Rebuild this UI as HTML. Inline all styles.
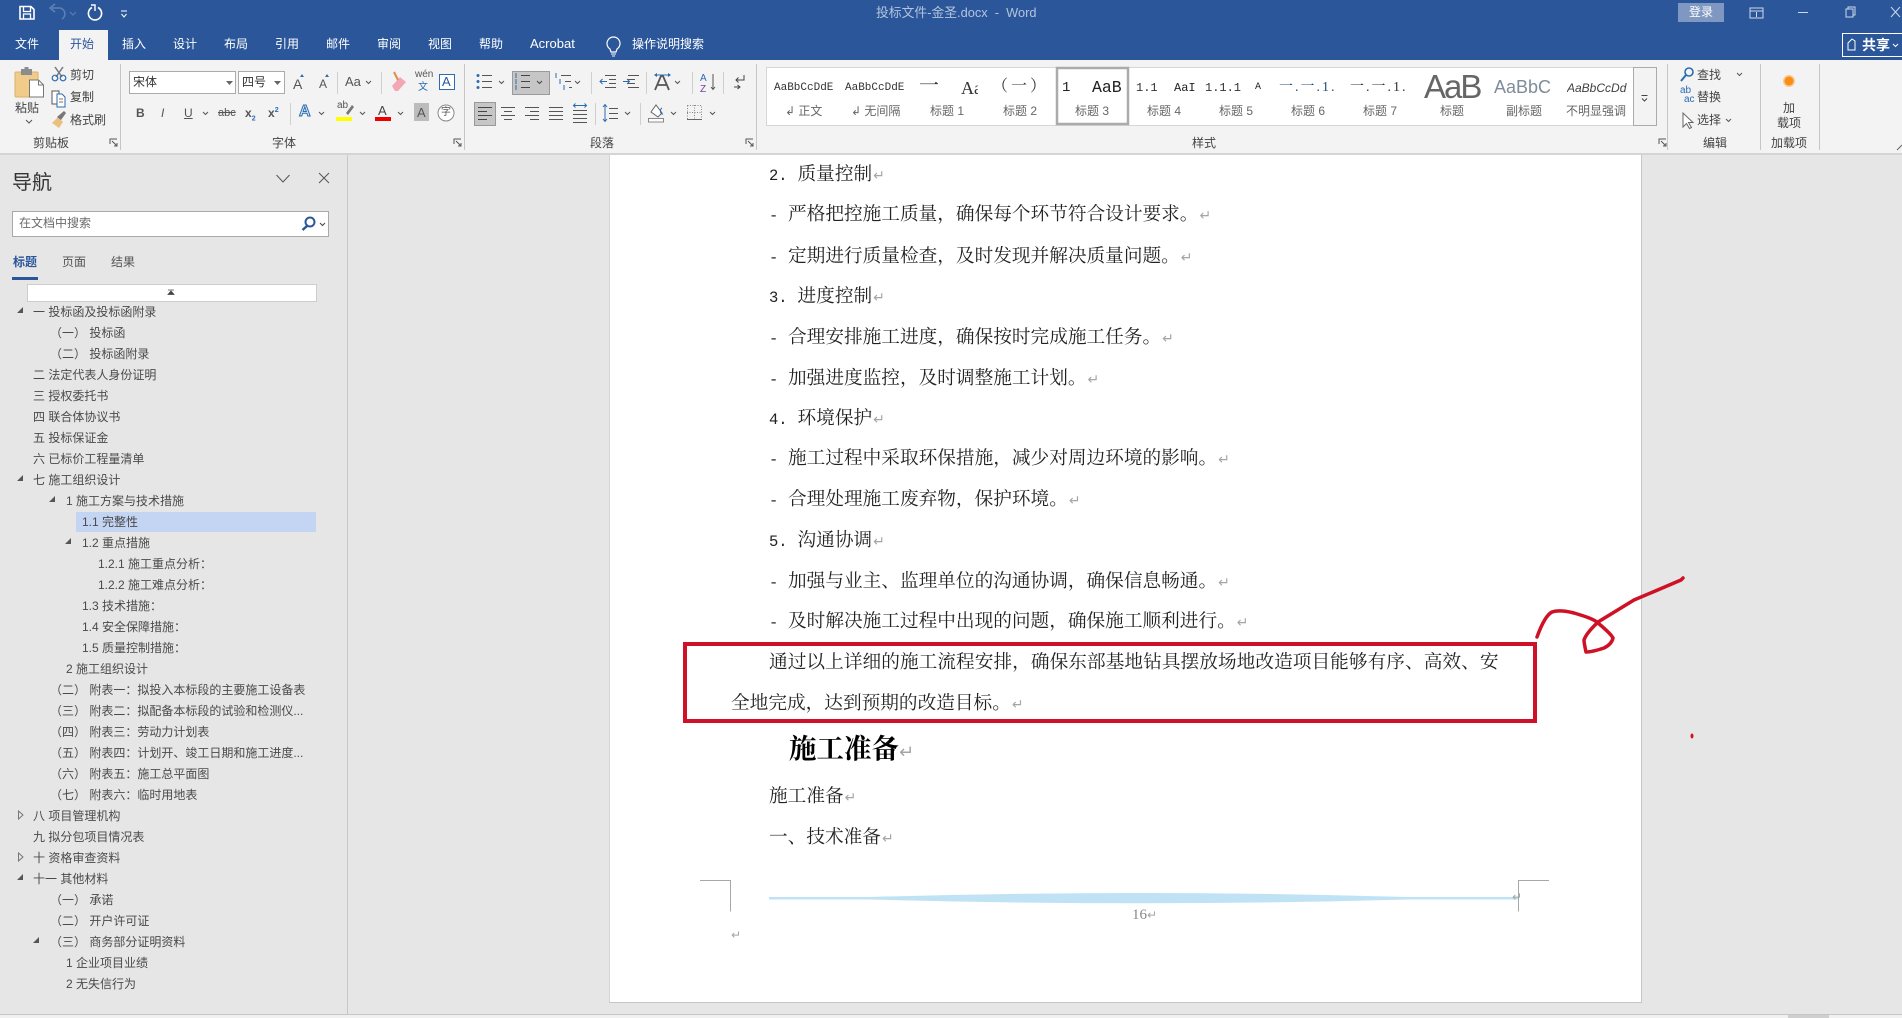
<!DOCTYPE html>
<html lang="zh-CN"><head><meta charset="utf-8"><title>投标文件-金圣.docx - Word</title>
<style>
*{box-sizing:border-box;margin:0;padding:0}
html,body{width:1902px;height:1018px;overflow:hidden;background:#e6e6e6}
body{position:relative;font-family:"Liberation Sans","Noto Sans CJK SC",sans-serif;font-size:12px;color:#444}
.a{position:absolute}
.t{position:absolute;white-space:nowrap;line-height:20px;height:20px}
.c{transform:translateX(-50%)}
.w{color:#fff}
.g{color:#666}
.mono{font-family:"Liberation Mono","Noto Sans CJK SC",monospace}
.se{font-family:"Liberation Serif","Noto Serif CJK SC",serif}
.n{position:absolute;white-space:nowrap;line-height:21px;height:21px;font-size:12px;color:#4a4a4a;margin-top:1px}
.d{position:absolute;left:769px;white-space:nowrap;font:18.67px/30px "Liberation Serif","Noto Serif CJK SC",serif;color:#222;margin-top:2px}
.m{display:inline-block;font:15.5px/30px "Liberation Mono",monospace}
.m2{width:28.5px}.m1{width:19px}
i.r{font:normal 14px/30px "DejaVu Sans",sans-serif;color:#a5a5a5;margin-left:1px}
svg{position:absolute;left:0;top:0}
</style></head><body>
<!-- chrome backgrounds -->
<div class="a" style="left:0;top:0;width:1902px;height:60px;background:#2b579a"></div>
<div class="a" style="left:59px;top:30px;width:49px;height:30px;background:#f3f3f3"></div>
<div class="a" style="left:0;top:60px;width:1902px;height:93px;background:#f3f3f3"></div>
<div class="a" style="left:0;top:153px;width:1902px;height:2px;background:#d4d4d4"></div>
<!-- page -->
<div class="a" style="left:609px;top:155px;width:1033px;height:848px;background:#fff;border-right:1px solid #c6c6c6;border-bottom:1px solid #c6c6c6;border-left:1px solid #d4d4d4"></div>
<div class="a" style="left:347px;top:155px;width:1px;height:859px;background:#c8c8c8"></div>
<div class="a" style="left:0;top:1014px;width:1902px;height:4px;background:#f1f1f1;border-top:1px solid #c6c6c6"></div>
<div class="a" style="left:1788px;top:1015px;width:41px;height:3px;background:#cfcfcf"></div>
<!-- title bar -->
<div class="t" style="left:876px;top:3px;color:#b4c4de;font-size:12.8px">投标文件-金圣.docx&nbsp; -&nbsp; Word</div>
<div class="a" style="left:1678px;top:3px;width:46px;height:19px;background:#7f98c1;color:#fff;text-align:center;line-height:19px;font-size:12px">登录</div>
<div class="t w" style="left:15px;top:34px">文件</div>
<div class="t" style="left:70px;top:34px;color:#2b579a">开始</div>
<div class="t w" style="left:122px;top:34px">插入</div>
<div class="t w" style="left:173px;top:34px">设计</div>
<div class="t w" style="left:224px;top:34px">布局</div>
<div class="t w" style="left:275px;top:34px">引用</div>
<div class="t w" style="left:326px;top:34px">邮件</div>
<div class="t w" style="left:377px;top:34px">审阅</div>
<div class="t w" style="left:428px;top:34px">视图</div>
<div class="t w" style="left:479px;top:34px">帮助</div>
<div class="t w" style="left:530px;top:34px;font-size:13px">Acrobat</div>
<div class="t w" style="left:632px;top:34px">操作说明搜索</div>
<div class="a" style="left:1842px;top:33px;width:60px;height:24px;border:1px solid #fff;border-right:0"></div>
<div class="t w" style="left:1862px;top:35px;font-size:14px;font-weight:700">共享</div>
<!-- ribbon icons -->
<svg width="1902" height="160" viewBox="0 0 1902 160" fill="none">
<!-- QAT -->
<path d="M20 6.500h11l3 3v9.500H20z" stroke="#fff" stroke-width="1.600"/><path d="M23.500 7v4.500h7V7M23.500 19v-5h7v5" stroke="#fff" stroke-width="1.300"/>
<path d="M62 19a6 6 0 0 0-2-11h-8M55 4l-5 4 5 4" stroke="#5f80b3" stroke-width="1.600"/><path d="M70 12l3 3 3-3" stroke="#5f80b3"/>
<path d="M92 7.500a6.600 6.600 0 1 0 6 0" stroke="#fff" stroke-width="1.600"/><path d="M91 5l4 0 0 6" stroke="#fff" stroke-width="1.400"/>
<path d="M121 11h6M121.500 14l2.500 3 2.500-3" stroke="#fff"/>
<!-- lightbulb -->
<path d="M610 49a6.500 6.500 0 1 1 7 0l-1 3h-5z" stroke="#fff" stroke-width="1.200"/><path d="M611 54h5M612 56h3" stroke="#fff"/>
<!-- window controls -->
<rect x="1750" y="8" width="13" height="10" stroke="#cdd8ea"/><path d="M1750 11h13M1756.500 12v5" stroke="#cdd8ea"/>
<path d="M1798 12.500h10" stroke="#cdd8ea"/>
<rect x="1846" y="9" width="7" height="8" stroke="#cdd8ea"/><path d="M1848 9V7h7v8h-2" stroke="#cdd8ea"/>
<path d="M1891 7l9 10M1900 7l-9 10" stroke="#cdd8ea"/>
<path d="M1848 50v-7l4-4 3 2v9z" stroke="#fff"/><path d="M1893 44l2.500 2.500 2.500-2.500" stroke="#fff"/>
<!-- paste -->
<rect x="15" y="72" width="23" height="25" rx="1" fill="#f0cb8a" stroke="#d9b06a"/><rect x="21" y="69" width="11" height="6" fill="#8c8c8c"/><rect x="24.500" y="67" width="4" height="3" fill="#8c8c8c"/>
<path d="M29.500 80h9l5 5v12h-14z" fill="#fff" stroke="#777"/><path d="M38.500 80v5h5" stroke="#777"/>
<path d="M26 120l3 3 3-3" stroke="#555"/>
<!-- cut -->
<path d="M55 67l7 10M63 67l-7 10" stroke="#777" stroke-width="1.500"/><circle cx="55" cy="78" r="2.800" stroke="#2b6cb0" stroke-width="1.200"/><circle cx="63" cy="78" r="2.800" stroke="#2b6cb0" stroke-width="1.200"/>
<!-- copy -->
<path d="M52 91h7v13h-7z" fill="#fff" stroke="#555"/><path d="M57 94h5l3 3v10h-8z" fill="#fff" stroke="#2b6cb0"/><path d="M59 99h4M59 102h4" stroke="#777"/>
<!-- painter -->
<path d="M52 123l6-6 5 5-4 6z" fill="#e9c07f"/><path d="M57 117l7-6 2 2-5 7z" fill="#777"/>
<!-- launchers -->
<path d="M110 144v-5h7M112 141l5 5M117 143v3h-3" stroke="#555"/>
<path d="M454 144v-5h7M456 141l5 5M461 143v3h-3" stroke="#555"/>
<path d="M746 144v-5h7M748 141l5 5M753 143v3h-3" stroke="#555"/>
<path d="M1659 144v-5h7M1661 141l5 5M1666 143v3h-3" stroke="#555"/>
<path d="M1897 150l5-5" stroke="#666"/>
<!-- separators -->
<path d="M120.500 64v86M464.500 64v86M756.500 64v86M1667.500 64v86M1760.500 64v86M1819.500 64v86" stroke="#c6c6c6"/>
<path d="M337.500 72v22M381.500 72v22M290.500 103v22M591.500 72v22M646.500 72v22M692.500 72v22M723.500 72v22M595.500 103v22M640.500 103v22" stroke="#cfcfcf"/>
<path d="M366 81l2.500 2.500 2.500-2.500M203 112l2.500 2.500 2.500-2.500M319 112l2.500 2.500 2.500-2.500M360 112l2.500 2.500 2.500-2.500M398 112l2.500 2.500 2.500-2.500" stroke="#555"/>
<path d="M300 77l2-3 2 3zM325 77l2-3 2 3" fill="#2b6cb0"/>
<!-- eraser -->
<path d="M392 86l8-9 6 5-8 9h-3z" fill="#f4a6b4"/><path d="M394 72l4 8" stroke="#e38b4a" stroke-width="2"/>
<!-- box A -->
<rect x="439.500" y="74.500" width="15" height="15" stroke="#2b6cb0" fill="#fff"/>
<!-- highlight / font color bars -->
<rect x="336" y="117" width="16" height="4" fill="#ff0"/><rect x="375" y="117" width="16" height="4" fill="#e00"/>
<path d="M346 113l6-8 2 2-6 8z" fill="#777"/>
<rect x="414" y="103" width="15" height="18" fill="#bcbcbc"/>
<circle cx="446" cy="113" r="8" stroke="#888" fill="#fff"/>
<!-- bullets -->
<g stroke="#555"><path d="M482 75.500h10M482 81.500h10M482 87.500h10"/></g>
<g fill="#2b6cb0"><circle cx="478" cy="75.500" r="1.500"/><circle cx="478" cy="81.500" r="1.500"/><circle cx="478" cy="87.500" r="1.500"/></g>
<path d="M499 81l2.500 2.500 2.500-2.500M575 81l2.500 2.500 2.500-2.500M675 81l2.500 2.500 2.500-2.500" stroke="#555"/>
<rect x="512.500" y="71.500" width="37" height="23" fill="#c6c6c6" stroke="#9a9a9a"/>
<path d="M521 75.500h9M521 81.500h9M521 87.500h9" stroke="#444"/><path d="M516 73v5M516 79v5M516 85v5" stroke="#2b6cb0"/><path d="M537 81l2.500 2.500 2.500-2.500" stroke="#444"/>
<path d="M561 75.500h10M565 81.500h6M569 87.500h3" stroke="#555"/><path d="M556 73v5M560 79v5M564 85v5" stroke="#2b6cb0"/>
<!-- indent -->
<path d="M605 75.500h11M609 79.500h7M609 83.500h7M605 87.500h11M628 75.500h11M628 79.500h7M628 83.500h7M628 87.500h11" stroke="#555"/>
<path d="M600 81.500h7M602.500 79l-2.500 2.500 2.500 2.500" stroke="#2b6cb0"/><path d="M623 81.500h6M627 79l2.500 2.500-2.500 2.500" stroke="#2b6cb0"/>
<!-- text dir -->
<path d="M655 90l6-14 2 0 6 14M658 85h8" stroke="#555" stroke-width="1.800"/><path d="M654 75l3-2v4zM671 75l-3-2v4z" fill="#2b6cb0"/><path d="M656 75h13" stroke="#2b6cb0"/>
<!-- sort -->
<path d="M713 74v15M711 87l2 2.500 2-2.500" stroke="#555"/>
<!-- pilcrow -->
<path d="M744 75v5h-8M738.500 77.500l-2.500 2.500 2.500 2.500M734 87h6M737.500 85l2.500 2-2.500 2" stroke="#444"/>
<!-- align -->
<rect x="474.500" y="102.500" width="21" height="23" fill="#c6c6c6" stroke="#9a9a9a"/>
<path d="M478 107.500h14M478 111.500h9M478 115.500h14M478 119.500h9" stroke="#444"/>
<path d="M501 107.500h14M504 111.500h8M501 115.500h14M504 119.500h8" stroke="#555"/>
<path d="M525 107.500h14M530 111.500h9M525 115.500h14M530 119.500h9" stroke="#555"/>
<path d="M549 107.500h14M549 111.500h14M549 115.500h14M549 119.500h14" stroke="#555"/>
<path d="M573 110.500h14M573 114.500h14M573 118.500h14M573 122.500h14" stroke="#555"/><path d="M573 105.500h14M575.500 103.500l-2 2 2 2M584.500 103.500l2 2-2 2" stroke="#2b6cb0"/>
<!-- line spacing -->
<path d="M609 108.500h9M609 113.500h9M609 118.500h9" stroke="#555"/><path d="M605 105v16M603 107l2-2.500 2 2.500M603 119l2 2.500 2-2.500" stroke="#2b6cb0"/>
<path d="M625 112l2.500 2.500 2.500-2.500M671 112l2.500 2.500 2.500-2.500M710 112l2.500 2.500 2.500-2.500" stroke="#555"/>
<!-- shading -->
<path d="M651 112l5-7 6 8-4 4z" fill="#fff" stroke="#666"/><path d="M662 108a2 3 0 1 0 1 6" stroke="#2b6cb0"/><rect x="648.500" y="118.500" width="15" height="3.500" stroke="#888" fill="#fff"/>
<!-- borders -->
<rect x="687.500" y="105.500" width="14" height="14" stroke="#888" stroke-dasharray="1 1.500"/><path d="M694.500 105v15M687 112.500h15" stroke="#888" stroke-dasharray="1 1.500"/><path d="M687 119.500h15" stroke="#666"/>
<!-- gallery -->
<rect x="766.500" y="67.500" width="867" height="58" fill="#fff" stroke="#d6d6d6"/>
<rect x="1057" y="68" width="71" height="56" fill="#fff" stroke="#ababab" stroke-width="2.500"/>
<rect x="1633.500" y="67.500" width="23" height="58" fill="#f3f3f3" stroke="#ababab"/>
<path d="M1641.500 95.500h6M1642 98.500l2.500 2.500 2.500-2.500" stroke="#444"/>
<!-- editing -->
<circle cx="1689" cy="72" r="4" stroke="#2b6cb0" stroke-width="1.600"/><path d="M1686 75l-5 6" stroke="#2b6cb0" stroke-width="2"/>
<path d="M1737 73l2.500 2.500 2.500-2.500M1726 119l2.500 2.500 2.500-2.500" stroke="#555"/>
<path d="M1683 113l0 14 3.500-3.500 3 5 2-1-3-5h4.500z" fill="#fff" stroke="#666"/>
<circle cx="1789" cy="81" r="6" fill="#f9a23a" opacity=".5"/><circle cx="1789" cy="81" r="4.500" fill="#fb8c14"/>
</svg>
<!-- ribbon text -->
<div class="t" style="left:15px;top:98px">粘贴</div>
<div class="t" style="left:70px;top:65px">剪切</div>
<div class="t" style="left:70px;top:87px">复制</div>
<div class="t" style="left:70px;top:110px">格式刷</div>
<div class="t" style="left:33px;top:133px">剪贴板</div>
<div class="a" style="left:129px;top:71px;width:107px;height:23px;background:#fff;border:1px solid #ababab;line-height:21px;padding-left:3px;font-size:12px;color:#333">宋体</div>
<div class="a" style="left:238px;top:71px;width:47px;height:23px;background:#fff;border:1px solid #ababab;line-height:21px;padding-left:3px;font-size:12px;color:#333">四号</div>
<div class="a" style="left:226px;top:81px;width:7px;height:4px;background:#666;clip-path:polygon(0 0,100% 0,50% 100%)"></div>
<div class="a" style="left:274px;top:81px;width:7px;height:4px;background:#666;clip-path:polygon(0 0,100% 0,50% 100%)"></div>
<div class="t" style="left:293px;top:74px;font-size:14px;color:#555">A</div>
<div class="t" style="left:319px;top:74px;font-size:12px;color:#555">A</div>
<div class="t" style="left:345px;top:72px;font-size:13px;color:#555">Aa</div>
<div class="t" style="left:415px;top:65px;font-size:10px;color:#555">wén</div>
<div class="t" style="left:418px;top:78px;font-size:10px;color:#2b6cb0">文</div>
<div class="t" style="left:442px;top:72px;font-size:13px;color:#2b579a">A</div>
<div class="t" style="left:136px;top:103px;font-weight:700;font-size:12px;color:#555">B</div>
<div class="t" style="left:161px;top:103px;font-style:italic;font-size:12px;color:#555">I</div>
<div class="t" style="left:184px;top:103px;text-decoration:underline;font-size:12px;color:#555">U</div>
<div class="t" style="left:218px;top:103px;text-decoration:line-through;font-size:11px;color:#555">abc</div>
<div class="t" style="left:245px;top:103px;font-size:12px;font-weight:700;color:#555">x<sub style="font-size:7px;color:#2b6cb0">2</sub></div>
<div class="t" style="left:268px;top:103px;font-size:12px;font-weight:700;color:#555">x<sup style="font-size:7px;line-height:0;color:#2b6cb0">2</sup></div>
<div class="t" style="left:299px;top:102px;font-size:16px;font-weight:700;color:#dce8f6;-webkit-text-stroke:1px #2b6cb0">A</div>
<div class="t" style="left:337px;top:96px;font-size:10px;color:#555">ab</div>
<div class="t" style="left:378px;top:101px;font-size:13px;color:#444">A</div>
<div class="t" style="left:417px;top:103px;font-size:13px;color:#555">A</div>
<div class="t c" style="left:446px;top:103px;font-size:10px;color:#555">字</div>
<div class="t" style="left:272px;top:133px">字体</div>
<div class="t" style="left:700px;top:69px;font-size:10px;color:#2b6cb0">A</div>
<div class="t" style="left:700px;top:80px;font-size:10px;color:#7b3fa0">Z</div>
<div class="t" style="left:590px;top:133px">段落</div>
<!-- gallery text -->
<div class="t mono" style="left:774px;top:78px;width:60px;overflow:hidden;font-size:11px;color:#333">AaBbCcDdE</div>
<div class="t mono" style="left:845px;top:78px;width:60px;overflow:hidden;font-size:11px;color:#333">AaBbCcDdE</div>
<div class="t se" style="left:919px;top:76px;font-size:20px;color:#333">一</div>
<div class="t se" style="left:961px;top:78px;width:17px;overflow:hidden;font-size:18px;color:#333">Aa</div>
<div class="t se" style="left:992px;top:77px;font-size:16px;letter-spacing:3px;color:#333">（一）</div>
<div class="t mono" style="left:1062px;top:78px;font-size:14px;color:#222">1</div>
<div class="t mono" style="left:1092px;top:78px;font-size:16.5px;color:#222">AaB</div>
<div class="t mono" style="left:1136px;top:78px;font-size:12px;color:#333">1.1</div>
<div class="t mono" style="left:1174px;top:78px;font-size:12px;color:#222">AaI</div>
<div class="t mono" style="left:1205px;top:78px;font-size:12px;color:#333">1.1.1</div>
<div class="t mono" style="left:1255px;top:78px;font-size:10px;color:#222">A</div>
<div class="t se" style="left:1279px;top:78px;font-size:14px;letter-spacing:2px;color:#1f4d78">一.一.1.</div>
<div class="t se" style="left:1350px;top:78px;font-size:14px;letter-spacing:2px;color:#333">一.一.1.</div>
<div class="t" style="left:1424px;top:74px;font-size:33px;letter-spacing:-2px;color:#666;line-height:26px">AaB</div>
<div class="t" style="left:1494px;top:77px;font-size:18px;color:#7f8c99">AaBbC</div>
<div class="t" style="left:1567px;top:78px;width:60px;overflow:hidden;font-size:12px;font-style:italic;color:#404040">AaBbCcDd</div>
<div class="t g" style="left:785px;top:101px">↲ 正文</div>
<div class="t g" style="left:851px;top:101px">↲ 无间隔</div>
<div class="t g c" style="left:947px;top:101px">标题 1</div>
<div class="t g c" style="left:1020px;top:101px">标题 2</div>
<div class="t g c" style="left:1092px;top:101px">标题 3</div>
<div class="t g c" style="left:1164px;top:101px">标题 4</div>
<div class="t g c" style="left:1236px;top:101px">标题 5</div>
<div class="t g c" style="left:1308px;top:101px">标题 6</div>
<div class="t g c" style="left:1380px;top:101px">标题 7</div>
<div class="t g c" style="left:1452px;top:101px">标题</div>
<div class="t g c" style="left:1524px;top:101px">副标题</div>
<div class="t g c" style="left:1596px;top:101px">不明显强调</div>
<div class="t" style="left:1192px;top:133px">样式</div>
<div class="t" style="left:1697px;top:65px">查找</div>
<div class="t" style="left:1680px;top:86px;font-size:10px;color:#2b6cb0;line-height:10px">ab</div>
<div class="t" style="left:1684px;top:95px;font-size:10px;color:#2b6cb0;line-height:10px">ac</div>
<div class="t" style="left:1697px;top:87px">替换</div>
<div class="t" style="left:1697px;top:110px">选择</div>
<div class="t" style="left:1703px;top:133px">编辑</div>
<div class="t c" style="left:1789px;top:98px">加</div>
<div class="t c" style="left:1789px;top:113px">载项</div>
<div class="t" style="left:1771px;top:133px">加载项</div>
<!-- nav panel -->
<div class="t" style="left:12px;top:172px;height:22px;line-height:22px;font-size:20px;color:#333">导航</div>
<svg width="347" height="320" viewBox="0 0 347 320" fill="none">
<path d="M276.500 175l6.500 7 6.500-7" stroke="#555"/><path d="M319 173l10 10M329 173l-10 10" stroke="#555"/>
</svg>
<div class="a" style="left:12px;top:211px;width:317px;height:26px;background:#fff;border:1px solid #a9a9a9"></div>
<div class="t" style="left:19px;top:213px;color:#6a6a6a">在文档中搜索</div>
<svg width="347" height="320" viewBox="0 0 347 320" fill="none">
<circle cx="310" cy="222" r="4.500" stroke="#2b579a" stroke-width="2"/><path d="M307 226l-4.500 4" stroke="#2b579a" stroke-width="2.500"/><path d="M320 223l2.500 2.500 2.500-2.500" stroke="#444"/>
<rect x="27.500" y="284.500" width="289" height="17" fill="#fff" stroke="#cdcdcd"/>
<path d="M168 290h6M171 291l-3 3.500h6z" fill="#444" stroke="#444" stroke-width=".8"/>
<rect x="12" y="277" width="26" height="3" fill="#2b579a"/>
</svg>
<svg width="347" height="1018" viewBox="0 0 347 1018" fill="none">
<rect x="76" y="512" width="240" height="20" fill="#c3d5f2"/>
<g fill="#555">
<path d="M23 307v6h-6zM23 475v6h-6zM55 496v6h-6zM71 538v6h-6zM23 874v6h-6zM39 937v6h-6z"/>
</g>
<path d="M18.500 811l4.500 4-4.500 4zM18.500 853l4.500 4-4.500 4z" stroke="#777"/>
</svg>
<div class="t" style="left:13px;top:252px;font-weight:700;color:#2b579a">标题</div>
<div class="t" style="left:62px;top:252px;color:#555">页面</div>
<div class="t" style="left:111px;top:252px;color:#555">结果</div>
<div class="n" style="left:33px;top:301px">一 投标函及投标函附录</div>
<div class="n" style="left:50px;top:322px">（一） 投标函</div>
<div class="n" style="left:50px;top:343px">（二） 投标函附录</div>
<div class="n" style="left:33px;top:364px">二 法定代表人身份证明</div>
<div class="n" style="left:33px;top:385px">三 授权委托书</div>
<div class="n" style="left:33px;top:406px">四 联合体协议书</div>
<div class="n" style="left:33px;top:427px">五 投标保证金</div>
<div class="n" style="left:33px;top:448px">六 已标价工程量清单</div>
<div class="n" style="left:33px;top:469px">七 施工组织设计</div>
<div class="n" style="left:66px;top:490px">1 施工方案与技术措施</div>
<div class="n" style="left:82px;top:511px">1.1 完整性</div>
<div class="n" style="left:82px;top:532px">1.2 重点措施</div>
<div class="n" style="left:98px;top:553px">1.2.1 施工重点分析：</div>
<div class="n" style="left:98px;top:574px">1.2.2 施工难点分析：</div>
<div class="n" style="left:82px;top:595px">1.3 技术措施：</div>
<div class="n" style="left:82px;top:616px">1.4 安全保障措施：</div>
<div class="n" style="left:82px;top:637px">1.5 质量控制措施：</div>
<div class="n" style="left:66px;top:658px">2 施工组织设计</div>
<div class="n" style="left:50px;top:679px">（二） 附表一：拟投入本标段的主要施工设备表</div>
<div class="n" style="left:50px;top:700px">（三） 附表二：拟配备本标段的试验和检测仪...</div>
<div class="n" style="left:50px;top:721px">（四） 附表三：劳动力计划表</div>
<div class="n" style="left:50px;top:742px">（五） 附表四：计划开、竣工日期和施工进度...</div>
<div class="n" style="left:50px;top:763px">（六） 附表五：施工总平面图</div>
<div class="n" style="left:50px;top:784px">（七） 附表六：临时用地表</div>
<div class="n" style="left:33px;top:805px">八 项目管理机构</div>
<div class="n" style="left:33px;top:826px">九 拟分包项目情况表</div>
<div class="n" style="left:33px;top:847px">十 资格审查资料</div>
<div class="n" style="left:33px;top:868px">十一 其他材料</div>
<div class="n" style="left:50px;top:889px">（一） 承诺</div>
<div class="n" style="left:50px;top:910px">（二） 开户许可证</div>
<div class="n" style="left:50px;top:931px">（三） 商务部分证明资料</div>
<div class="n" style="left:66px;top:952px">1 企业项目业绩</div>
<div class="n" style="left:66px;top:973px">2 无失信行为</div>
<!-- document -->
<div class="d" style="top:158px"><span class="m m2">2.</span>质量控制<i class="r">↵</i></div>
<div class="d" style="top:198px"><span class="m m1">-</span>严格把控施工质量，确保每个环节符合设计要求。<i class="r">↵</i></div>
<div class="d" style="top:240px"><span class="m m1">-</span>定期进行质量检查，及时发现并解决质量问题。<i class="r">↵</i></div>
<div class="d" style="top:280px"><span class="m m2">3.</span>进度控制<i class="r">↵</i></div>
<div class="d" style="top:321px"><span class="m m1">-</span>合理安排施工进度，确保按时完成施工任务。<i class="r">↵</i></div>
<div class="d" style="top:362px"><span class="m m1">-</span>加强进度监控，及时调整施工计划。<i class="r">↵</i></div>
<div class="d" style="top:402px"><span class="m m2">4.</span>环境保护<i class="r">↵</i></div>
<div class="d" style="top:442px"><span class="m m1">-</span>施工过程中采取环保措施，减少对周边环境的影响。<i class="r">↵</i></div>
<div class="d" style="top:483px"><span class="m m1">-</span>合理处理施工废弃物，保护环境。<i class="r">↵</i></div>
<div class="d" style="top:524px"><span class="m m2">5.</span>沟通协调<i class="r">↵</i></div>
<div class="d" style="top:565px"><span class="m m1">-</span>加强与业主、监理单位的沟通协调，确保信息畅通。<i class="r">↵</i></div>
<div class="d" style="top:605px"><span class="m m1">-</span>及时解决施工过程中出现的问题，确保施工顺利进行。<i class="r">↵</i></div>
<div class="d" style="top:646px;letter-spacing:.05px">通过以上详细的施工流程安排，确保东部基地钻具摆放场地改造项目能够有序、高效、安</div>
<div class="d" style="top:687px;left:731px">全地完成，达到预期的改造目标。<i class="r">↵</i></div>
<div class="d" style="top:729px;left:789px;font-size:27.500px;line-height:36px;font-weight:700;color:#000">施工准备<i class="r" style="font-size:18px;line-height:36px;margin:0">↵</i></div>
<div class="d" style="top:780px">施工准备<i class="r">↵</i></div>
<div class="d" style="top:821px">一、技术准备<i class="r">↵</i></div>
<svg width="1902" height="1018" viewBox="0 0 1902 1018" fill="none">
<path d="M700 880.500h30.500v31M1549 880.500h-30.500v31" stroke="#a8a8a8"/>
<path d="M769 897H870Q1140 889 1407 897H1518v2.500H1407Q1140 907 870 899.500H769z" fill="#bfe3f4"/>
<rect x="685" y="644" width="850" height="77" stroke="#ce1126" stroke-width="4"/>
<path d="M1537 637C1541 626 1546 615 1552 612C1558 610 1566 611 1574 613C1584 616 1594 619 1598 623C1604 628 1611 634 1613 638C1612 643 1608 646 1604 648C1598 650 1591 652 1586 652C1585 647 1584 643 1584 640C1586 634 1592 628 1598 622L1634 600L1660 589L1681 580L1683 578" stroke="#ce1126" stroke-width="3.500" stroke-linecap="round" stroke-linejoin="round"/>
<ellipse cx="1692" cy="736" rx="1.500" ry="2.500" fill="#ce1126"/>
</svg>
<div class="d" style="top:898px;left:1132px;font-size:15px;color:#888">16<i class="r" style="font-size:12px;margin:0">↵</i></div>
<div class="d" style="top:875px;left:1512px;font-size:13px;color:#888"><i class="r" style="font-size:12px;margin:0;line-height:40px">↵</i></div>
<div class="d" style="top:917px;left:731px"><i class="r" style="font-size:12px;margin:0">↵</i></div>
</body></html>
